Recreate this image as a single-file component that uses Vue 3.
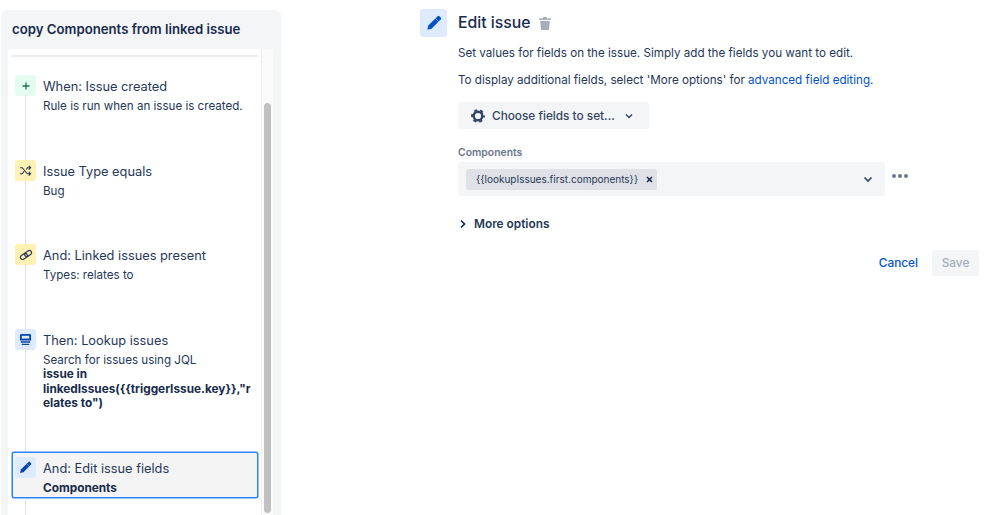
<script setup>
const steps = [
  { id: 1, kind: 'green', icon: 'plus', title: 'When: Issue created', lines: ['Rule is run when an issue is created.'] },
  { id: 2, kind: 'yellow', icon: 'shuffle', title: 'Issue Type equals', lines: ['Bug'] },
  { id: 3, kind: 'yellow', icon: 'link', title: 'And: Linked issues present', lines: ['Types: relates to'] },
  {
    id: 4,
    kind: 'blue',
    icon: 'lookup',
    title: 'Then: Lookup issues',
    lines: ['Search for issues using JQL'],
    bold: ['issue in', 'linkedIssues({{triggerIssue.key}},"r', 'elates to")'],
  },
  { id: 5, kind: 'blue', icon: 'pencil', title: 'And: Edit issue fields', lines: [], bold: ['Components'], selected: true },
]
</script>

<template>
  <div class="page">
    <aside class="rule-panel">
      <h2 class="rule-name">copy Components from linked issue</h2>
      <div class="rule-body">
        <div class="rule-list">
          <div class="top-line"></div>
          <div
            v-for="step in steps"
            :key="step.id"
            class="step"
            :class="{ 'is-selected': step.selected, 'is-tall': step.id === 4 }"
          >
            <div class="step-icon" :class="step.kind">
              <svg v-if="step.icon === 'plus'" viewBox="0 0 12 12" width="12" height="12">
                <path d="M6 2.500v7M2.500 6h7" stroke="#216e4e" stroke-width="1.300" fill="none" />
              </svg>
              <svg v-else-if="step.icon === 'shuffle'" viewBox="0 0 14 14" width="13" height="13">
                <path d="M1 4h2.500l5.500 6.500h3M1 10.500h2.500L5.500 8M8 6l1-2h3M10.500 2l2 2-2 2M10.500 8.500l2 2-2 2" stroke="#253858" stroke-width="1.200" fill="none" />
              </svg>
              <svg v-else-if="step.icon === 'link'" viewBox="0 0 14 14" width="14" height="14">
                <g transform="rotate(-35 7 7)" fill="none" stroke="#253858" stroke-width="1.200">
                  <rect x="0.800" y="4.800" width="7.400" height="4.400" rx="2.200" />
                  <rect x="5.800" y="4.800" width="7.400" height="4.400" rx="2.200" />
                </g>
              </svg>
              <svg v-else-if="step.icon === 'lookup'" viewBox="0 0 14 14" width="13" height="13">
                <path d="M2.500 1h9A1.500 1.500 0 0 1 13 2.500V8H1V2.500A1.500 1.500 0 0 1 2.500 1Z" fill="#0747a6" />
                <path d="M3 3h8v3H3z" fill="#deebff" />
                <path d="M2 9h10v1.500H2zM3 11.500h8V13H3z" fill="#0747a6" />
              </svg>
              <svg v-else viewBox="0 0 14 14" width="13" height="13">
                <path d="M1.200 12.800 2 9.200 10.200 1a1 1 0 0 1 1.400 0L13 2.400a1 1 0 0 1 0 1.400L4.800 12z" fill="#0747a6" />
                <path d="m8.300 3.100 2.600 2.600" stroke="#deebff" stroke-width="0.500" />
              </svg>
            </div>
            <div class="step-text">
              <div class="step-title">{{ step.title }}</div>
              <div v-for="line in step.lines" :key="line" class="step-line">{{ line }}</div>
              <div v-for="line in step.bold" :key="line" class="step-line bold">{{ line }}</div>
            </div>
          </div>
        </div>
        <div class="scroll-track">
          <div class="scroll-thumb"></div>
        </div>
      </div>
    </aside>

    <main class="editor">
      <div class="editor-icon">
        <svg viewBox="0 0 14 14" width="16" height="16">
          <path d="M1.200 12.800 2 9.200 10.200 1a1 1 0 0 1 1.400 0L13 2.400a1 1 0 0 1 0 1.400L4.800 12z" fill="#0052cc" />
          <path d="m8.300 3.100 2.600 2.600" stroke="#deebff" stroke-width="0.500" />
        </svg>
      </div>
      <div class="editor-body">
        <div class="editor-head">
          <h1>Edit issue</h1>
          <svg class="trash" viewBox="0 0 14 14" width="14" height="14">
            <path d="M1 2.500h12v1.500H1zM5 1h4v1.500H5zM2.200 5h9.600l-.7 8a1 1 0 0 1-1 .9H3.900a1 1 0 0 1-1-.9z" fill="#a5adba" />
          </svg>
        </div>
        <p class="intro first">Set values for fields on the issue. Simply add the fields you want to edit.</p>
        <p class="intro">To display additional fields, select 'More options' for <a class="link">advanced field editing</a>.</p>

        <button type="button" class="choose-btn">
          <svg viewBox="0 0 16 16" width="16" height="16">
            <circle cx="8" cy="8" r="4.300" fill="none" stroke="#344563" stroke-width="2.400" />
            <circle cx="8" cy="8" r="6" fill="none" stroke="#344563" stroke-width="1.800" stroke-dasharray="3.140 3.140" stroke-dashoffset="1.570" />
          </svg>
          <span>Choose fields to set...</span>
          <svg class="chev" viewBox="0 0 10 10" width="10" height="10">
            <path d="m2 3.500 3 3 3-3" fill="none" stroke="#344563" stroke-width="1.500" />
          </svg>
        </button>

        <label class="field-label">Components</label>
        <div class="field-row">
          <div class="select">
            <span class="tag">
              <span>{{ '{{lookupIssues.first.components}\u007d' }}</span>
              <svg viewBox="0 0 8 8" width="7" height="7">
                <path d="m1.200 1.200 5.600 5.600M6.800 1.200 1.200 6.800" stroke="#172b4d" stroke-width="1.800" />
              </svg>
            </span>
            <svg class="select-chev" viewBox="0 0 10 10" width="10" height="10">
              <path d="m1.500 3.500 3.500 3.500 3.500-3.500" fill="none" stroke="#344563" stroke-width="1.700" />
            </svg>
          </div>
          <div class="dots"><i></i><i></i><i></i></div>
        </div>

        <div class="more">
          <svg viewBox="0 0 10 10" width="10" height="10">
            <path d="m3 1.500 3.500 3.500-3.500 3.500" fill="none" stroke="#172b4d" stroke-width="1.700" />
          </svg>
          <span>More options</span>
        </div>

        <div class="actions">
          <a class="cancel">Cancel</a>
          <button type="button" class="save" disabled>Save</button>
        </div>
      </div>
    </main>
  </div>
</template>

<style>
html,
body {
  margin: 0;
  background: #fff;
}
</style>

<style scoped>
* {
  box-sizing: border-box;
}

.page {
  width: 999px;
  height: 515px;
  overflow: hidden;
  display: flex;
  align-items: flex-start;
  padding: 10px 0 0 1px;
  font-family: Inter, 'Liberation Sans', sans-serif;
  color: #172b4d;
}

.rule-panel {
  width: 280px;
  height: 505px;
  flex: none;
  padding: 0 8px 0 7px;
  background: #f4f5f7;
  border-radius: 6px 6px 0 0;
}

.rule-name {
  margin: 0;
  height: 39px;
  padding: 10px 0 0 4px;
  font-size: 13.200px;
  line-height: 18px;
  font-weight: 600;
}

.rule-body {
  display: flex;
  height: 466px;
}

.rule-list {
  width: 253px;
  background: #fff;
  border-radius: 4px 0 0 0;
  padding: 6px 3px 0 3px;
}

.top-line {
  height: 2px;
  background: #ebecf0;
  margin-bottom: 18px;
}

.step {
  position: relative;
  display: flex;
  gap: 7px;
  height: 84.500px;
  padding-left: 4px;
}

.step.is-tall {
  height: 123.500px;
}

.step::before {
  content: '';
  position: absolute;
  left: 14px;
  top: 20px;
  bottom: -5px;
  width: 1px;
  background: #dfe1e6;
}

.step.is-selected {
  height: 46px;
  margin: 0 0 0 1px;
  padding: 4px 0 0 2px;
  background: #f4f4f4;
  border: 1px solid #2684ff;
  border-radius: 2px;
  box-shadow: 0 0 0 0.5px #2684ff;
}

.step.is-selected::before {
  top: 45px;
  left: 12px;
  bottom: -18px;
}

.step-icon {
  width: 21px;
  height: 21px;
  flex: none;
  display: grid;
  place-items: center;
  border-radius: 3px;
}

.step-icon.green {
  background: #e3fcef;
}

.step-icon.yellow {
  background: #fff0b3;
}

.step-icon.blue {
  background: #deebff;
}

.step-title {
  margin-top: 3px;
  font-size: 12.800px;
  line-height: 18px;
  color: #253858;
}

.step-line {
  font-size: 11.600px;
  line-height: 14.500px;
  color: #253858;
}

.step-title + .step-line {
  margin-top: 3px;
}

.step-line.bold {
  font-size: 11.800px;
  font-weight: 700;
  color: #172b4d;
}

.scroll-track {
  width: 12px;
  background: #fafafa;
  border-left: 1px solid #f0f0f0;
  padding: 54px 2px 0 2px;
}

.scroll-thumb {
  width: 7px;
  height: 410px;
  background: #c1c1c1;
  border-radius: 4px;
}

.editor {
  display: flex;
  gap: 11px;
  margin-left: 139px;
  margin-top: -1px;
  width: 560px;
}

.editor-icon {
  width: 27px;
  height: 28px;
  flex: none;
  display: grid;
  place-items: center;
  background: #deebff;
  border-radius: 3px;
}

.editor-body {
  width: 521px;
}

.editor-head {
  display: flex;
  align-items: center;
  gap: 7px;
  height: 28px;
}

h1 {
  margin: 0;
  font-size: 15.800px;
  line-height: 28px;
  font-weight: 500;
  color: #172b4d;
}

.intro {
  margin: 0;
  font-size: 11.650px;
  line-height: 16px;
  color: #253858;
  white-space: nowrap;
}

.intro.first {
  margin-top: 8px;
  margin-bottom: 11px;
}

.link {
  color: #0052cc;
}

.choose-btn {
  display: flex;
  align-items: center;
  width: 191px;
  height: 27px;
  margin-top: 14px;
  padding: 0 0 0 12px;
  border: 0;
  border-radius: 3px;
  background: #f4f5f7;
  color: #344563;
  font: 500 11.800px Inter, 'Liberation Sans', sans-serif;
  gap: 6px;
}

.choose-btn .chev {
  margin-left: 3px;
}

.field-label {
  display: block;
  margin-top: 17px;
  font-size: 10.400px;
  line-height: 13px;
  font-weight: 600;
  color: #6b778c;
}

.field-row {
  display: flex;
  gap: 7px;
  margin-top: 3px;
}

.select {
  width: 427px;
  height: 34px;
  display: flex;
  align-items: center;
  justify-content: space-between;
  padding: 0 12px 0 8px;
  background: #f4f5f7;
  border-radius: 3px;
}

.tag {
  width: 191px;
  height: 21px;
  display: flex;
  align-items: center;
  gap: 8px;
  padding-left: 10px;
  background: #dfe1e6;
  border-radius: 3px;
  font-size: 10px;
  color: #253858;
  white-space: nowrap;
}

.tag svg {
  flex: none;
}

.dots {
  display: flex;
  gap: 2px;
  height: 28px;
  align-items: center;
}

.dots i {
  width: 4px;
  height: 4px;
  border-radius: 50%;
  background: #6b778c;
}

.more {
  display: flex;
  align-items: center;
  gap: 6px;
  margin-top: 19px;
  font-size: 11.850px;
  line-height: 18px;
  font-weight: 600;
  color: #253858;
}

.actions {
  display: flex;
  align-items: center;
  justify-content: flex-end;
  gap: 14px;
  margin-top: 17px;
}

.cancel {
  color: #0052cc;
  font-size: 11.800px;
  font-weight: 500;
}

.save {
  width: 47px;
  height: 26px;
  border: 0;
  border-radius: 3px;
  background: #f4f5f7;
  color: #a5adba;
  font: 500 11.800px Inter, 'Liberation Sans', sans-serif;
}
</style>
